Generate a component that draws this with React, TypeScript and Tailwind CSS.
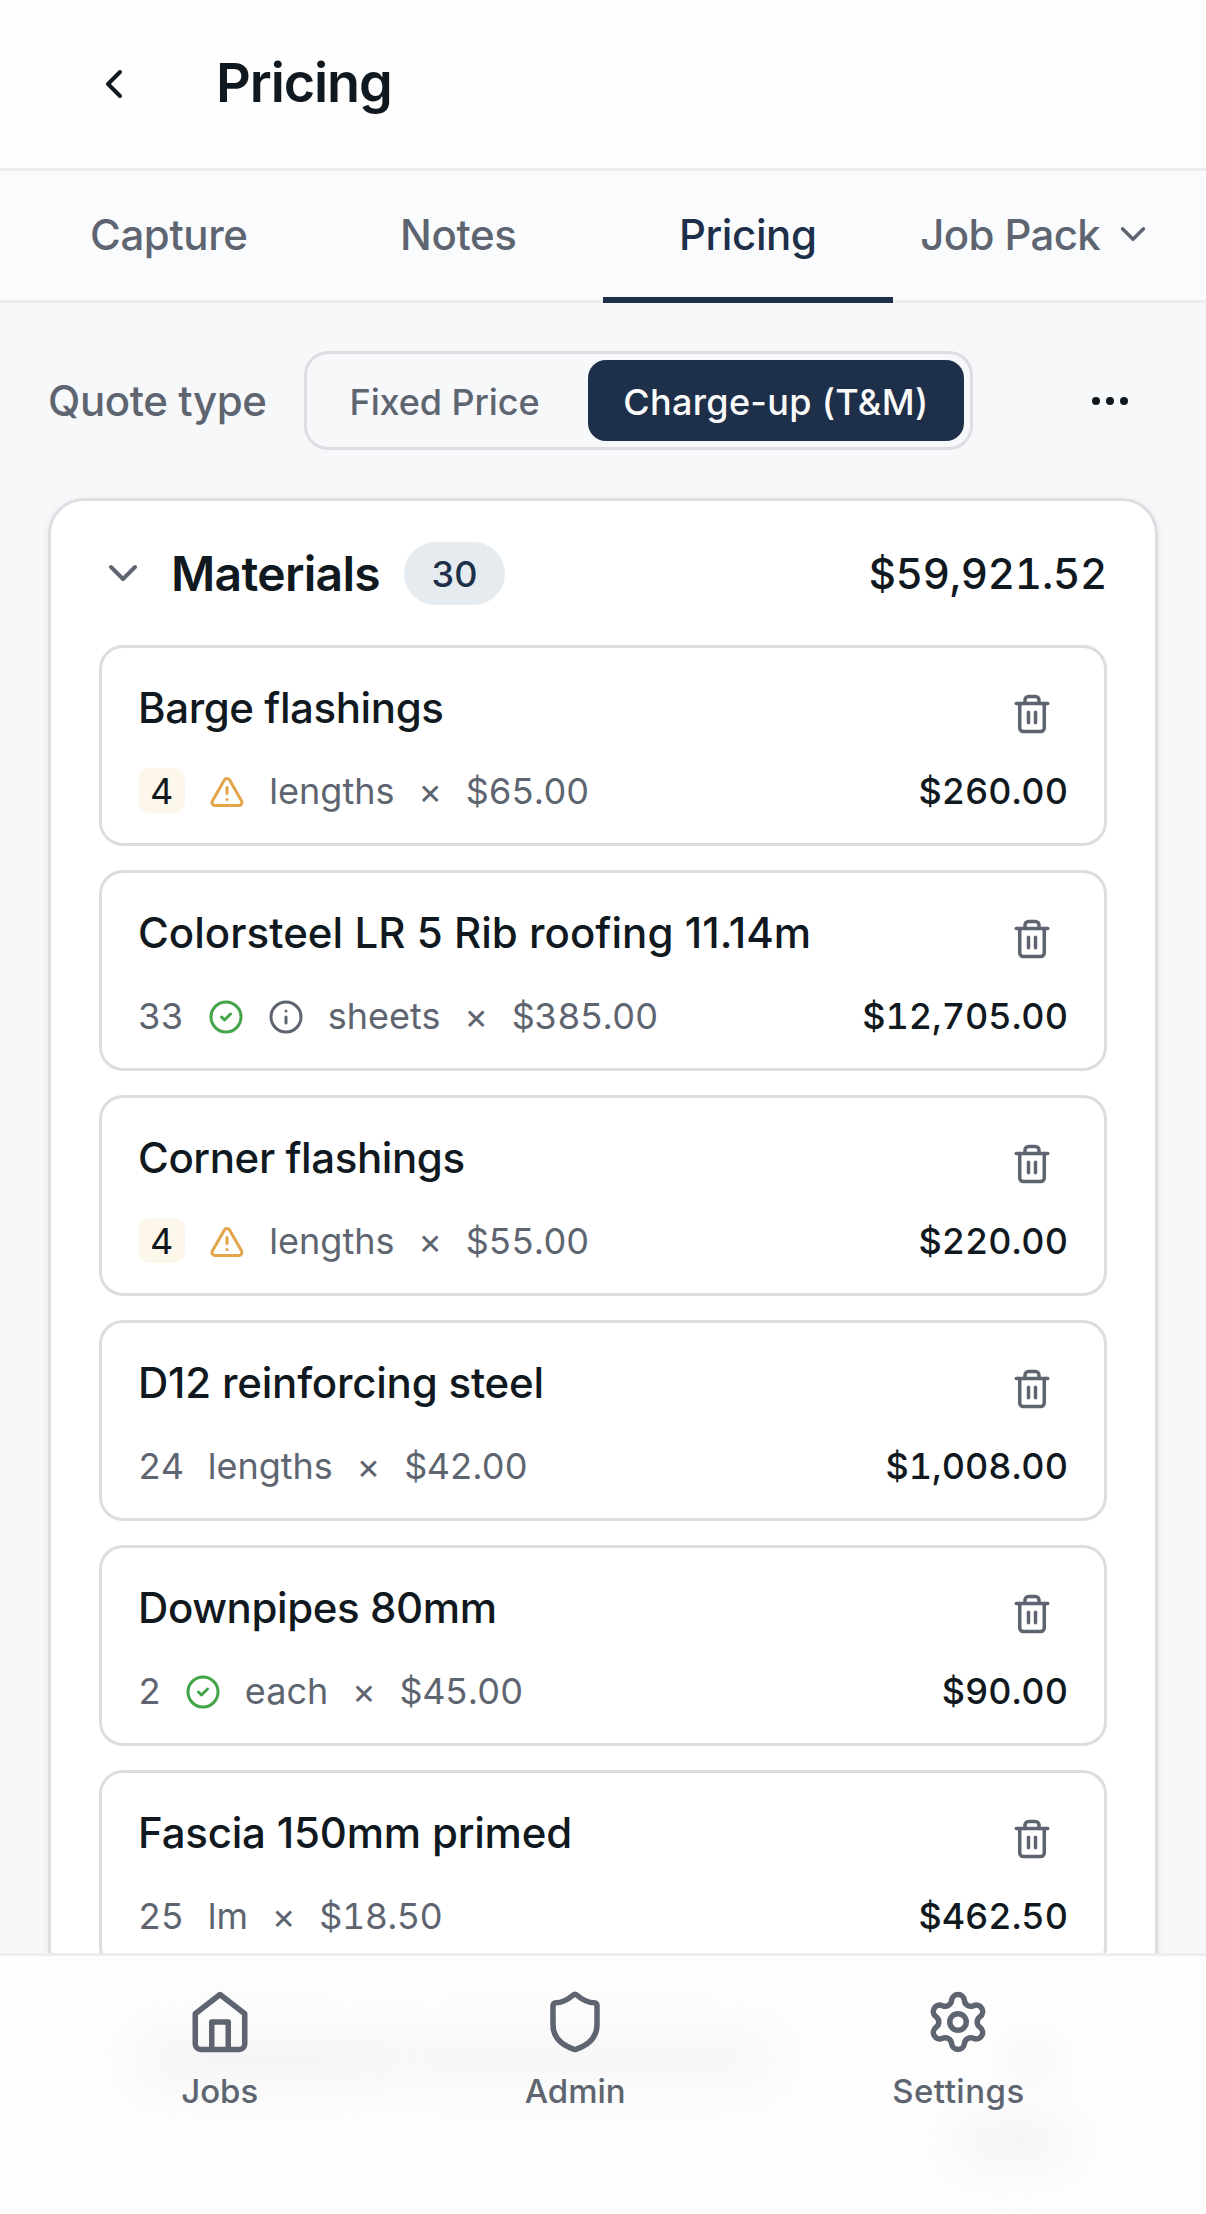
import {
  ChevronDown,
  ChevronLeft,
  CircleCheck,
  Ellipsis,
  Info,
  Settings,
  Shield,
  Trash2,
  TriangleAlert,
} from "lucide-react"

type Item = {
  name: string
  qty: string
  unit: string
  rate: string
  total: string
  tracking: string
  status?: "warning" | "ok"
  info?: boolean
}

const items: Item[] = [
  { name: "Barge flashings", qty: "4", unit: "lengths", rate: "$65.00", total: "$260.00", tracking: "tracking-[-0.4px]", status: "warning" },
  { name: "Colorsteel LR 5 Rib roofing 11.14m", qty: "33", unit: "sheets", rate: "$385.00", total: "$12,705.00", tracking: "tracking-[0.04px]", status: "ok", info: true },
  { name: "Corner flashings", qty: "4", unit: "lengths", rate: "$55.00", total: "$220.00", tracking: "tracking-[-0.4px]", status: "warning" },
  { name: "D12 reinforcing steel", qty: "24", unit: "lengths", rate: "$42.00", total: "$1,008.00", tracking: "tracking-[-0.2px]" },
  { name: "Downpipes 80mm", qty: "2", unit: "each", rate: "$45.00", total: "$90.00", tracking: "tracking-[-0.4px]", status: "ok" },
  { name: "Fascia 150mm primed", qty: "25", unit: "lm", rate: "$18.50", total: "$462.50", tracking: "tracking-[-0.2px]" },
]

const HomeIcon = () => (
  <svg
    viewBox="0 0 24 24"
    fill="none"
    stroke="currentColor"
    strokeWidth="2"
    strokeLinecap="round"
    strokeLinejoin="round"
    className="size-[66px]"
  >
    <path d="m3 9 9-7 9 7v11a2 2 0 0 1-2 2H5a2 2 0 0 1-2-2z" />
    <polyline points="9 22 9 12 15 12 15 22" />
  </svg>
)

const Header = () => (
  <header className="flex h-[171px] shrink-0 items-center border-b-[3px] border-[#ebedee] bg-[#fefefe] pl-[90px]">
    <button>
      <ChevronLeft className="size-12" />
    </button>
    <h1 className="ml-[78px] pb-0.5 text-[54px] leading-none font-semibold tracking-[-0.02em]">Pricing</h1>
  </header>
)

const Tabs = () => (
  <nav className="grid h-[132px] shrink-0 grid-cols-4 bg-[#fafbfd] px-6 text-[42px] font-medium tracking-[-0.4px] text-[#5e6570] shadow-[inset_0_-3px_0_#ebedee]">
    <button className="border-b-[6px] border-transparent">Capture</button>
    <button className="border-b-[6px] border-transparent">Notes</button>
    <button className="border-b-[6px] border-[#1e2f4a] text-[#1e2f4a]">Pricing</button>
    <button className="flex items-center justify-center gap-3 border-b-[6px] border-transparent tracking-[-0.65px] whitespace-nowrap">
      Job Pack
      <ChevronDown className="size-[42px]" />
    </button>
  </nav>
)

const QuoteType = () => (
  <div className="flex h-[99px] items-center">
    <span className="w-[256px] text-[42px] leading-none font-medium tracking-[-0.4px] whitespace-nowrap text-[#5e6570]">
      Quote type
    </span>
    <div className="flex h-[99px] w-[669px] gap-3 rounded-3xl border-[3px] border-[#dcdee1] p-1.5 text-[36px] font-medium whitespace-nowrap">
      <button className="w-[263px] rounded-[18px] pt-0.5 tracking-[-0.1px] text-[#5e6570]">Fixed Price</button>
      <button className="flex-1 rounded-[18px] bg-[#1e2f4a] pt-0.5 tracking-[0.3px] text-[#fafafa]">
        Charge-up (T&amp;M)
      </button>
    </div>
    <button className="mr-6 ml-auto">
      <Ellipsis className="size-12" />
    </button>
  </div>
)

const ItemCard = ({ item }: { item: Item }) => (
  <li className="h-[201px] rounded-3xl border-[3px] border-[#dcdde1] px-9 pt-[30px]">
    <div className="flex justify-between">
      <h3 className={`text-[42px] leading-[60px] font-medium whitespace-nowrap ${item.tracking}`}>{item.name}</h3>
      <button className="flex size-[72px] items-center justify-center text-[#5e6570]">
        <Trash2 className="size-[42px]" />
      </button>
    </div>
    <div className="mt-[18px] flex h-[45px] items-center gap-6 pt-0.5 text-[36px] leading-[43px] text-[#5e6570] tabular-nums">
      {item.status === "warning" ? (
        <span className="-mt-0.5 h-[45px] rounded-xl bg-[#fdf6ea] px-3 pt-0.5 text-[#101820]">{item.qty}</span>
      ) : (
        <span className="tracking-[-0.5px]">{item.qty}</span>
      )}
      {item.status === "warning" && <TriangleAlert className="size-9 text-[#e3a54a]" />}
      {item.status === "ok" && <CircleCheck className="size-9 text-[#43a54a]" />}
      {item.info && <Info className="size-9" />}
      <span>{item.unit}</span>
      <span>×</span>
      <span className="tracking-[-0.5px]">{item.rate}</span>
      <span className="ml-auto font-medium text-[#101820]">{item.total}</span>
    </div>
  </li>
)

const Materials = () => (
  <section className="mt-12 h-[1700px] rounded-[36px] border-[3px] border-[#dcdee1] bg-white px-12 shadow-[0_3px_9px_rgba(0,0,0,0.08)]">
    <div className="flex h-36 items-center">
      <ChevronDown className="size-12 text-[#5e6570]" />
      <h2 className="ml-6 pt-0.5 text-[48px] leading-none font-semibold tracking-[-0.0145em]">Materials</h2>
      <span className="ml-6 flex h-[63px] w-[101px] items-center justify-center rounded-full bg-[#e6ebef] pt-0.5 text-[36px] font-medium text-[#1e2f4a]">
        30
      </span>
      <span className="ml-auto text-[42px] font-medium tracking-[-0.2px] tabular-nums">$59,921.52</span>
    </div>
    <ul className="flex flex-col gap-6">
      {items.map((item) => (
        <ItemCard key={item.name} item={item} />
      ))}
    </ul>
  </section>
)

const BottomNav = () => (
  <nav className="relative h-[261px] shrink-0 overflow-hidden border-t-[3px] border-[#ebedee] bg-[#fdfdfd] px-12 text-[#5e6570]">
    <div className="absolute top-[84px] left-[140px] h-[38px] w-[250px] rounded-full bg-[#f2f2f2] blur-[22px]" />
    <div className="absolute top-[84px] left-[390px] h-[36px] w-[380px] rounded-full bg-[#f4f4f4] blur-[22px]" />
    <div className="absolute top-[168px] left-[960px] h-[36px] w-[106px] rounded-full bg-[#f2f2f2] blur-[20px]" />
    <div className="absolute top-[88px] left-[1015px] h-[36px] w-[34px] rounded-full bg-[#f3f3f3] blur-[16px]" />
    <div className="relative flex justify-around pt-[33px] text-[33px] leading-[42px] font-medium">
      <button className="flex flex-col items-center gap-[15px]">
        <HomeIcon />
        Jobs
      </button>
      <button className="flex flex-col items-center gap-[15px]">
        <Shield className="size-[66px]" />
        Admin
      </button>
      <button className="flex flex-col items-center gap-[15px] tracking-[0.5px]">
        <Settings className="size-[66px]" />
        Settings
      </button>
    </div>
  </nav>
)

export default function App() {
  return (
    <div className="flex h-[2214px] w-[1206px] flex-col overflow-hidden bg-[#f7f8fa] font-['Inter',sans-serif] text-[#101820]">
      <Header />
      <Tabs />
      <main className="min-h-0 flex-1 overflow-hidden px-12 pt-12">
        <QuoteType />
        <Materials />
      </main>
      <BottomNav />
    </div>
  )
}
